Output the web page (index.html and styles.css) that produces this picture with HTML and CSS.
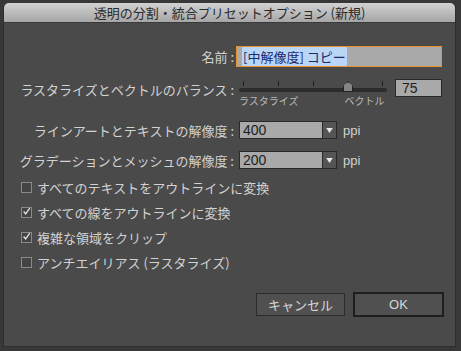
FILE: index.html
```html
<!DOCTYPE html>
<html lang="ja">
<head>
  <meta charset="UTF-8" />
  <title>透明の分割・統合プリセットオプション (新規)</title>
  <link rel="stylesheet" href="styles.css">
</head>
<body>

  <div class="dialog">
    <div class="titlebar">透明の分割・統合プリセットオプション (新規)</div>

    <div class="content">
      <!-- Name -->
      <div class="row row-name">
        <label class="label">名前 :</label>
        <div class="name-input"><span class="sel">[中解像度] コピー</span></div>
      </div>

      <!-- Balance slider -->
      <div class="row row-slider">
        <label class="label">ラスタライズとベクトルのバランス :</label>
        <div class="slider">
          <div class="ticks">
            <span></span><span></span><span></span><span></span><span></span>
          </div>
          <div class="track"><span class="thumb"></span></div>
          <div class="ends">
            <span>ラスタライズ</span>
            <span class="end-vec">ベクトル</span>
          </div>
        </div>
        <div class="num-box">75</div>
      </div>

      <!-- Resolutions -->
      <div class="row row-select">
        <label class="label">ラインアートとテキストの解像度 :</label>
        <div class="select">
          <span class="select-val">400</span>
          <span class="select-btn"><svg viewBox="0 0 8 6"><path d="M0 0h8L4 6z"/></svg></span>
        </div>
        <span class="unit">ppi</span>
      </div>
      <div class="row row-select">
        <label class="label">グラデーションとメッシュの解像度 :</label>
        <div class="select">
          <span class="select-val">200</span>
          <span class="select-btn"><svg viewBox="0 0 8 6"><path d="M0 0h8L4 6z"/></svg></span>
        </div>
        <span class="unit">ppi</span>
      </div>

      <!-- Options -->
      <div class="checks">
        <div class="check"><span class="box"></span>すべてのテキストをアウトラインに変換</div>
        <div class="check"><span class="box"><svg viewBox="0 0 11 11"><path d="M2 5.5l2.5 3L9.5 1.5"/></svg></span>すべての線をアウトラインに変換</div>
        <div class="check"><span class="box"><svg viewBox="0 0 11 11"><path d="M2 5.5l2.5 3L9.5 1.5"/></svg></span>複雑な領域をクリップ</div>
        <div class="check"><span class="box"></span>アンチエイリアス (ラスタライズ)</div>
      </div>

      <div class="buttons">
        <button class="btn">キャンセル</button>
        <button class="btn btn-ok">OK</button>
      </div>
    </div>
  </div>

</body>
</html>
```

FILE: styles.css
```css
* { box-sizing: border-box; }
body {
  margin: 0;
  width: 461px;
  height: 351px;
  overflow: hidden;
  background: #383838;
  font-family: "Noto Sans CJK JP", "Noto Sans", sans-serif;
  font-size: 13px;
  color: #d2d2d2;
}

.dialog {
  margin: 3px 0 0 3px;
  width: 453px;
  height: 344px;
  background: #4a4a4a;
  border: 1px solid #2e2e2e;
  border-top: none;
  border-radius: 5px 5px 0 0;
  display: flex;
  flex-direction: column;
}
.titlebar {
  height: 20px;
  line-height: 20px;
  text-align: center;
  font-size: 13px;
  color: #2a2a2a;
  background: linear-gradient(#d2d2d2, #a6a6a6);
  border-radius: 5px 5px 0 0;
  border-bottom: 1px solid #3a3a3a;
}

.content {
  flex: 1;
  display: flex;
  flex-direction: column;
  padding-top: 23px;
}

.row {
  display: flex;
  align-items: center;
}
.label {
  width: 230px;
  text-align: right;
  flex-shrink: 0;
  white-space: nowrap;
}

/* Name field */
.row-name { height: 21px; }
.name-input {
  margin-left: 2px;
  width: 206px;
  height: 21px;
  background: #a9a9a9;
  border: 1px solid #e8902c;
  padding: 2px 0 0 5px;
  font-size: 13px;
  line-height: 15px;
}
.name-input .sel {
  background: #b9d6f6;
  color: #1c2a6a;
  padding: 0 1px;
}

/* Slider */
.row-slider {
  margin-top: 12px;
  height: 30px;
  align-items: flex-start;
}
.row-slider .label { margin-top: 1px; }
.slider {
  margin-left: 5px;
  width: 148px;
  display: flex;
  flex-direction: column;
}
.ticks {
  display: flex;
  justify-content: space-between;
  padding: 0 4px;
  height: 6px;
  margin-top: 2px;
}
.ticks span {
  width: 1px;
  height: 5px;
  background: #1e1e1e;
}
.track {
  position: relative;
  height: 4px;
  margin-top: 1px;
  background: #2c2c2c;
  border-radius: 2px;
}
.thumb {
  position: absolute;
  left: 104px;
  top: -6px;
  width: 10px;
  height: 10px;
  background: #858585;
  border: 1px solid #222;
  clip-path: polygon(50% 0, 100% 40%, 100% 100%, 0 100%, 0 40%);
}
.ends {
  display: flex;
  font-size: 10px;
  color: #b8b8b8;
  margin-top: 3px;
  line-height: 12px;
}
.end-vec { margin-left: 46px; }
.num-box {
  margin-left: 8px;
  width: 47px;
  height: 18px;
  background: #a9a9a9;
  border: 1px solid #2a2a2a;
  color: #1e1e1e;
  font-family: "Liberation Sans", sans-serif;
  font-size: 14px;
  line-height: 16px;
  padding-left: 6px;
}

/* Selects */
.row-select { height: 18px; margin-top: 12px; }
.row-select + .row-select { margin-top: 12px; }
.select {
  margin-left: 5px;
  width: 98px;
  height: 18px;
  display: flex;
  border: 1px solid #2a2a2a;
}
.select-val {
  flex: 1;
  background: #a9a9a9;
  color: #1e1e1e;
  font-family: "Liberation Sans", sans-serif;
  font-size: 14px;
  line-height: 16px;
  padding-left: 3px;
}
.select-btn {
  width: 14px;
  background: #555;
  border-left: 1px solid #2a2a2a;
  display: flex;
  align-items: center;
  justify-content: center;
}
.select-btn svg {
  width: 7px;
  height: 5px;
  fill: #e8e8e8;
}
.unit {
  margin-left: 6px;
  font-family: "Liberation Sans", sans-serif;
  font-size: 13px;
}

/* Checkboxes */
.checks {
  margin-top: 6px;
  padding-left: 17px;
  display: flex;
  flex-direction: column;
}
.check {
  height: 25px;
  display: flex;
  align-items: center;
  font-size: 13px;
}
.box {
  width: 11px;
  height: 11px;
  border: 1px solid #8a8a8a;
  background: #444;
  margin-right: 5px;
  display: flex;
}
.box svg {
  width: 11px;
  height: 11px;
  margin: -2px 0 0 0;
  fill: none;
  stroke: #e4e4e4;
  stroke-width: 1.6;
}

/* Buttons */
.buttons {
  display: flex;
  justify-content: flex-end;
  gap: 8px;
  margin-top: 18px;
  padding-right: 11px;
}
.btn {
  font-family: inherit;
  font-size: 13px;
  color: #d6d6d6;
  background: #505050;
  border: 1px solid #2c2c2c;
  width: 89px;
  height: 23px;
  padding: 0;
}
.btn-ok {
  width: 91px;
  height: 25px;
  margin-top: -1px;
  border: 2px solid #1e1e1e;
  font-family: "Liberation Sans", sans-serif;
  font-size: 13px;
}
```
